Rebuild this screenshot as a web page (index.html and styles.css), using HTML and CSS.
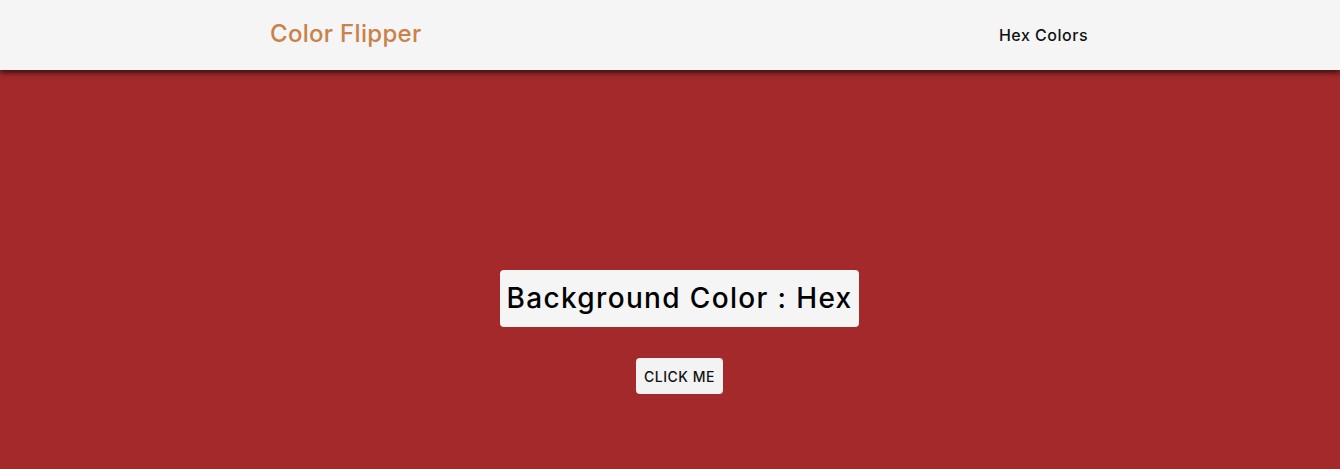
FILE: index.html
```html
<!DOCTYPE html>
<html lang="en">
<head>
<meta charset="utf-8">
<title>Color Flipper</title>
<link rel="stylesheet" href="styles.css">
</head>
<body>
<nav class="nav">
  <div class="nav-center">
    <h4 class="logo">Color Flipper</h4>
    <ul class="nav-links">
      <li><a href="#" class="nav-link">Hex Colors</a></li>
    </ul>
  </div>
</nav>
<main class="main">
  <div class="container">
    <h2 class="title">Background Color : Hex</h2>
    <button class="btn" type="button">CLICK ME</button>
  </div>
</main>
</body>
</html>
```

FILE: styles.css
```css
* { box-sizing: border-box; margin: 0; padding: 0; }
html, body { height: 100%; }
body {
  font-family: "Inter", "Open Sans", sans-serif;
  background: #a3292a;
  color: #000;
  overflow: hidden;
}
.nav {
  height: 70px;
  background: #f5f5f5;
  box-shadow: 0 3px 5px rgba(0, 0, 0, 0.6);
  position: relative;
  z-index: 1;
}
.nav-center {
  width: 818px;
  margin: 0 0 0 270px;
  height: 100%;
  display: flex;
  align-items: center;
  justify-content: space-between;
}
.logo {
  font-size: 24px;
  font-weight: 500;
  letter-spacing: 0.3px;
  color: #c8824a;
  position: relative;
  top: -2px;
}
.nav-links { list-style: none; }
.nav-link {
  text-decoration: none;
  color: #111;
  font-size: 16px;
  font-weight: 500;
  letter-spacing: 0.5px;
}
.main {
  display: flex;
  justify-content: center;
  padding-top: 200px;
  padding-left: 19px;
}
.container {
  display: flex;
  flex-direction: column;
  align-items: center;
  gap: 31px;
}
.title {
  background: #f5f5f5;
  border-radius: 4px;
  font-size: 28px;
  font-weight: 500;
  letter-spacing: 1.35px;
  line-height: 57px;
  height: 57px;
  padding: 0 6px;
}
.btn {
  background: #f3f3f3;
  border: none;
  border-radius: 4px;
  font-family: inherit;
  font-size: 14px;
  font-weight: 500;
  letter-spacing: 0.5px;
  height: 36px;
  padding: 0 8px;
  color: #111;
}
```
